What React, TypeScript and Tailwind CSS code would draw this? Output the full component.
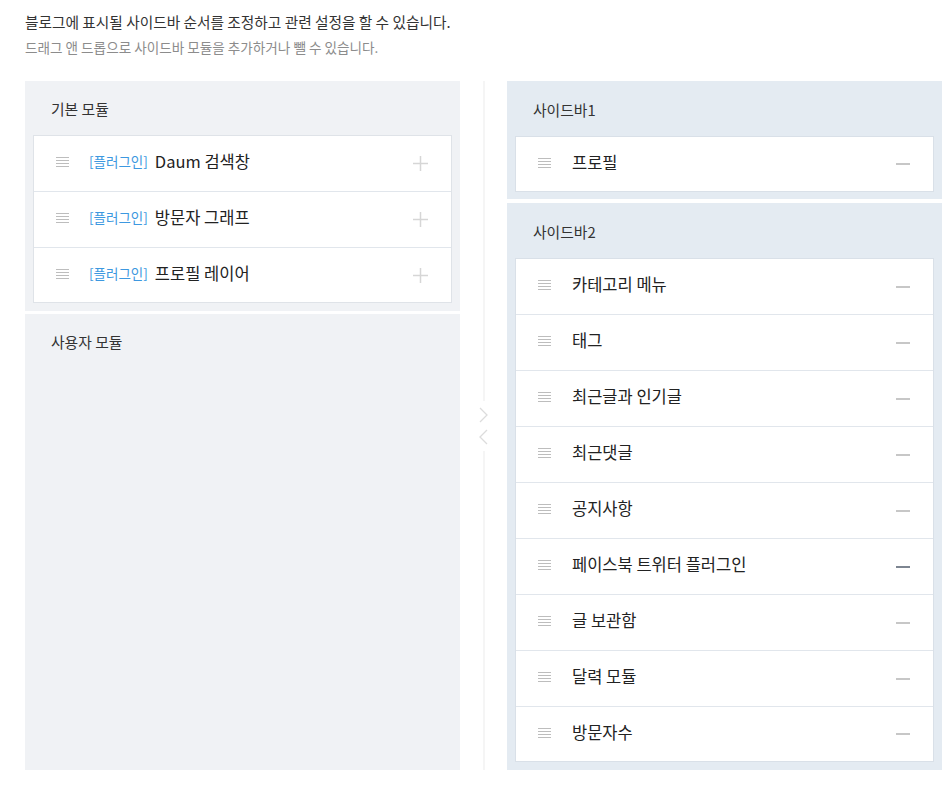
import React from 'react';

const font = { fontFamily: '"Noto Sans CJK KR", "Noto Sans", sans-serif' };

const Handle = () => (
  <svg width="13" height="10" viewBox="0 0 13 10" className="shrink-0 mb-[3px]">
    {[0.5, 3.5, 6.5, 9.5].map(y => (
      <line key={y} x1="0" y1={y} x2="13" y2={y} stroke="#bdbdbd" strokeWidth="1" />
    ))}
  </svg>
);

const Plus = () => (
  <svg width="15" height="15" viewBox="0 0 15 15" className="shrink-0">
    <line x1="7.5" y1="0" x2="7.5" y2="15" stroke="#d6d6d6" strokeWidth="1.5" />
    <line x1="0" y1="7.5" x2="15" y2="7.5" stroke="#d6d6d6" strokeWidth="1.5" />
  </svg>
);

const Minus = ({ active }: { active?: boolean }) => (
  <svg width="14" height="4" viewBox="0 0 14 4" className="shrink-0">
    <line x1="0" y1="2" x2="14" y2="2" stroke={active ? '#7d8591' : '#8f8f8f'} strokeWidth={active ? 2 : 1} />
  </svg>
);

const basicModules = ['Daum 검색창', '방문자 그래프', '프로필 레이어'];
const sidebar2 = ['카테고리 메뉴', '태그', '최근글과 인기글', '최근댓글', '공지사항', '페이스북 트위터 플러그인', '글 보관함', '달력 모듈', '방문자수'];

const Row = ({ children, right, last }: { children: React.ReactNode; right: React.ReactNode; last?: boolean }) => (
  <div className={`flex items-center pl-[22px] pr-[23px] bg-white ${last ? 'h-[54px]' : 'h-[56px] border-b border-[#e1e6ec]'}`}>
    <Handle />
    <div className="flex-1 flex items-center ml-[20px] pb-[4px] min-w-0">{children}</div>
    {right}
  </div>
);

export default function App() {
  return (
    <div className="bg-white w-[950px] h-[798px] pl-[25px] pt-[11px]" style={font}>
      <p className="text-[14.7px] leading-[22px] text-[#333]">블로그에 표시될 사이드바 순서를 조정하고 관련 설정을 할 수 있습니다.</p>
      <p className="text-[13.6px] leading-[20px] text-[#8c8c8c] mt-[4px]">드래그 앤 드롭으로 사이드바 모듈을 추가하거나 뺄 수 있습니다.</p>

      <div className="flex mt-[24px] h-[689px]">
        {/* left */}
        <div className="w-[435px] shrink-0 flex flex-col gap-[3px]">
          <div className="bg-[#f0f2f5] px-[8px] pb-[8px]">
            <div className="h-[54px] flex items-center pt-[3px] pl-[18px] text-[14.8px] text-[#333]">기본 모듈</div>
            <div className="border border-[#dfe3e8]">
              {basicModules.map((m, i) => (
                <Row key={m} last={i === basicModules.length - 1} right={<Plus />}>
                  <span className="text-[13.5px] text-[#3d98e0] mr-[7px]">[플러그인]</span>
                  <span className="text-[16.5px] text-[#222]">{m}</span>
                </Row>
              ))}
            </div>
          </div>
          <div className="bg-[#f0f2f5] flex-1">
            <div className="h-[56px] flex items-center pl-[26px] text-[14.8px] text-[#333]">사용자 모듈</div>
          </div>
        </div>

        {/* middle */}
        <div className="w-[47px] shrink-0 flex flex-col items-center">
          <div className="w-[2px] flex-1 bg-[#f5f5f5]" />
          <div className="flex flex-col items-center gap-[6px] py-[6px]">
            <svg width="9" height="16" viewBox="0 0 9 16"><polyline points="1,1 8,8 1,15" fill="none" stroke="#dcdcdc" strokeWidth="1.3" /></svg>
            <svg width="9" height="16" viewBox="0 0 9 16"><polyline points="8,1 1,8 8,15" fill="none" stroke="#dcdcdc" strokeWidth="1.3" /></svg>
          </div>
          <div className="w-[2px] flex-1 bg-[#f5f5f5]" />
        </div>

        {/* right */}
        <div className="w-[435px] shrink-0 flex flex-col gap-[4px]">
          <div className="bg-[#e4ebf2] px-[8px] pb-[7px]">
            <div className="h-[55px] flex items-center pt-[3px] pl-[18px] text-[14.8px] text-[#333]">사이드바1</div>
            <div className="border border-[#d9e0e8]">
              <Row last right={<Minus />}>
                <span className="text-[16.5px] text-[#222] ml-[1px]">프로필</span>
              </Row>
            </div>
          </div>
          <div className="bg-[#e4ebf2] px-[8px] pb-[8px] flex-1">
            <div className="h-[55px] flex items-center pt-[3px] pl-[18px] text-[14.8px] text-[#333]">사이드바2</div>
            <div className="border border-[#d9e0e8]">
              {sidebar2.map((m, i) => (
                <Row key={m} last={i === sidebar2.length - 1} right={<Minus active={i === 5} />}>
                  <span className="text-[16.5px] text-[#222] ml-[1px]">{m}</span>
                </Row>
              ))}
            </div>
          </div>
        </div>
      </div>
    </div>
  );
}
